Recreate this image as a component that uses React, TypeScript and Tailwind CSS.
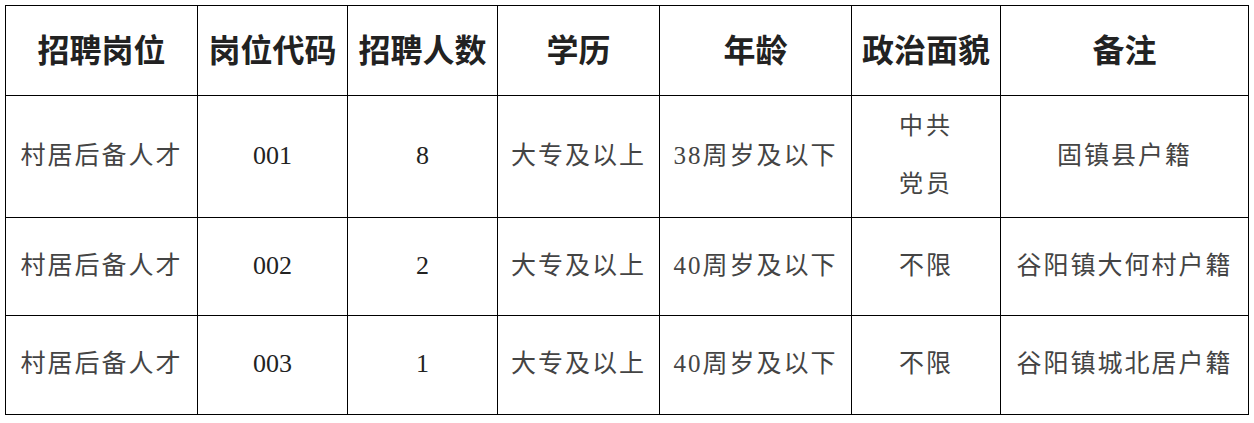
import React from "react";

const HEADERS = ["招聘岗位", "岗位代码", "招聘人数", "学历", "年龄", "政治面貌", "备注"];
const WIDTHS = ["w-[192px]", "w-[150px]", "w-[150px]", "w-[162px]", "w-[192px]", "w-[149px]", "w-[248px]"];

const ROWS = [
  {
    h: "h-[122px]",
    cells: ["村居后备人才", "001", "8", "大专及以上", "38周岁及以下", "party", "固镇县户籍"],
  },
  {
    h: "h-[98px]",
    cells: ["村居后备人才", "002", "2", "大专及以上", "40周岁及以下", "不限", "谷阳镇大何村户籍"],
  },
  {
    h: "h-[99px]",
    cells: ["村居后备人才", "003", "1", "大专及以上", "40周岁及以下", "不限", "谷阳镇城北居户籍"],
  },
];

export default function App() {
  return (
    <div className="w-[1254px] h-[423px] bg-white pt-[5px] pl-[5px]">
      <table className="table-fixed border-collapse w-[1243px]">
        <thead>
          <tr className="h-[90px]">
            {HEADERS.map((h, i) => (
              <th
                key={h}
                className={`${WIDTHS[i]} border border-black p-0 pb-[6px] text-center align-middle text-[32px] font-bold text-[#222] leading-none [font-family:'Noto_Sans_CJK_SC',sans-serif]`}
              >
                {h}
              </th>
            ))}
          </tr>
        </thead>
        <tbody>
          {ROWS.map((row, r) => (
            <tr key={r} className={row.h}>
              {row.cells.map((c, i) => (
                <td
                  key={i}
                  className="border border-black p-0 text-center align-middle text-[#444] [font-family:'Liberation_Serif','Noto_Sans_CJK_SC',serif]"
                >
                  {c === "party" ? (
                    <div className="flex flex-col items-center gap-[34px] pb-[3px] text-[24px] tracking-[3px] leading-none">
                      <span>中共</span>
                      <span>党员</span>
                    </div>
                  ) : /^\d+$/.test(c) ? (
                    <span className="text-[26px] leading-none text-[#222]">{c}</span>
                  ) : (
                    <span className="text-[25px] tracking-[2px] leading-none whitespace-nowrap">{c}</span>
                  )}
                </td>
              ))}
            </tr>
          ))}
        </tbody>
      </table>
    </div>
  );
}
